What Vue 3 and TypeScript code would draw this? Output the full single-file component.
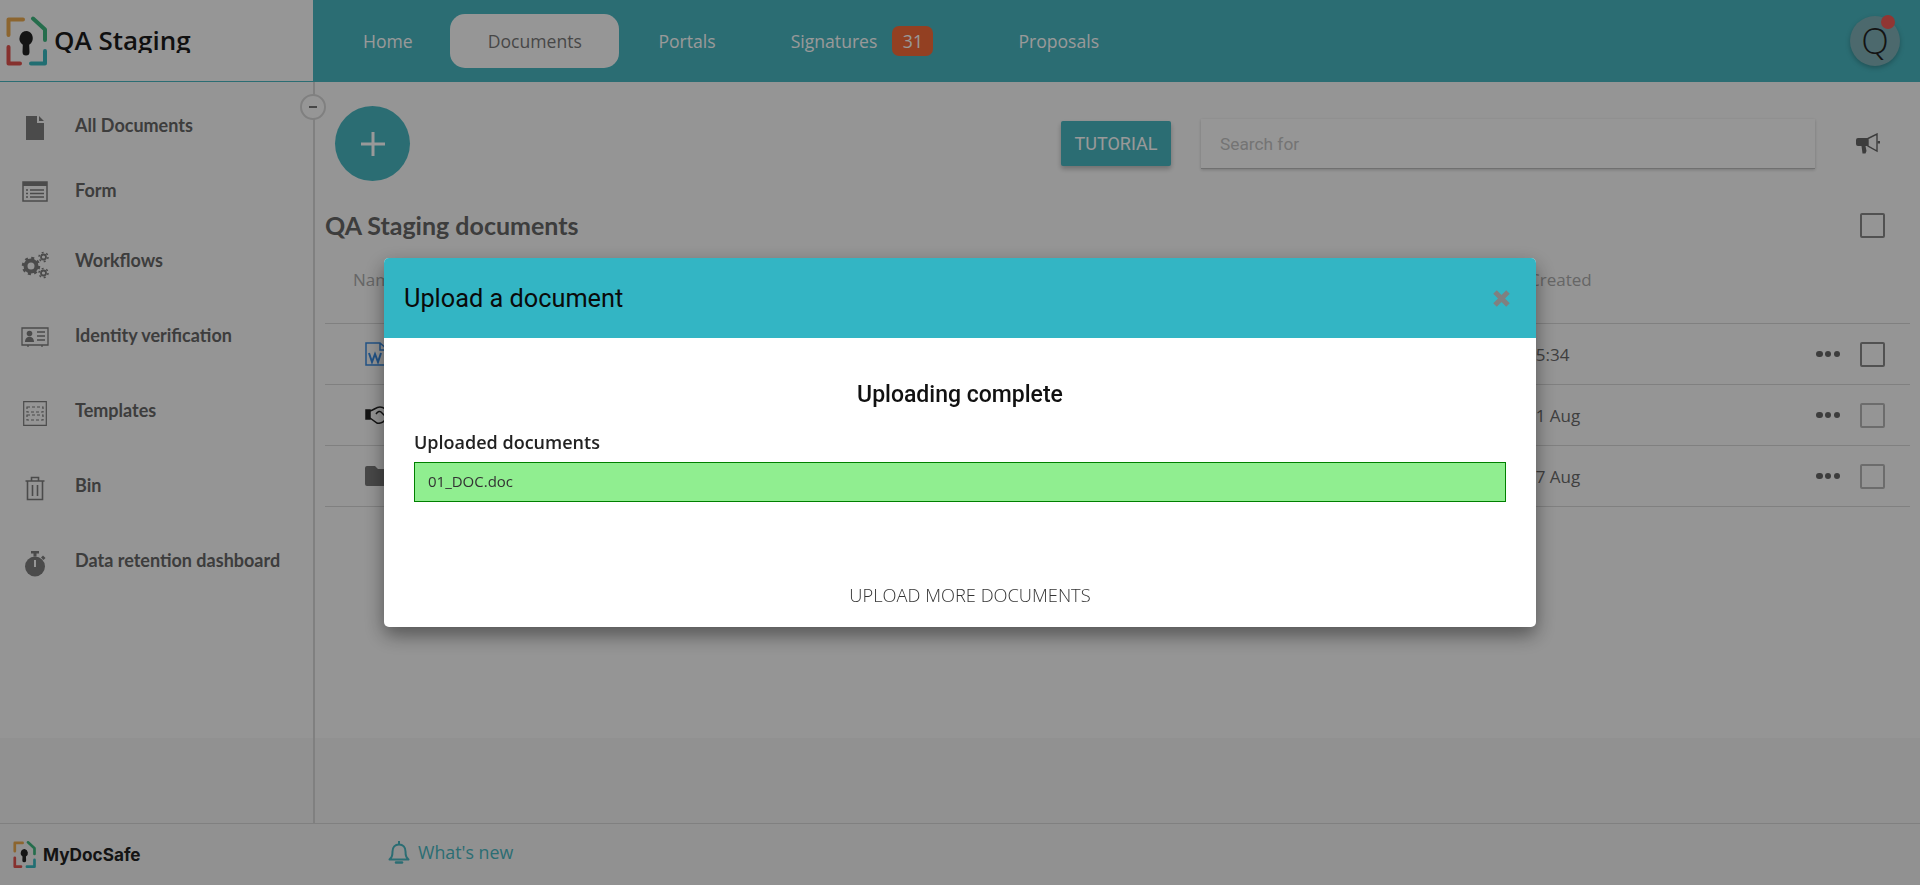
<template>
  <div class="page">
    <header class="topbar">
      <div class="brand">
        <svg class="brand-logo" viewBox="0 0 41 50" fill="none" stroke-width="4" stroke-linecap="round" stroke-linejoin="round">
          <path d="M2.5 19V3.5H17" stroke="#e9a94f" />
          <path d="M27 2.500L39 13.500V24" stroke="#3fb67f" />
          <path d="M2.500 31V47.500H14" stroke="#e0524e" />
          <path d="M39 35V47.500H25" stroke="#38b8bf" />
          <path d="M21 15a7.500 7.500 0 0 0-4.200 13.700L16.500 36a3.500 3.500 0 0 0 7 0l-.3-7.300A7.500 7.500 0 0 0 21 15z" fill="#222" stroke="none" />
        </svg>
        <span class="brand-name">QA Staging</span>
      </div>
      <nav class="nav">
        <a v-for="item in navItems" :key="item.label" class="nav-item" :class="{ active: item.active, 'has-badge': item.badge }">
          {{ item.label }}
          <span v-if="item.badge" class="badge">{{ item.badge }}</span>
        </a>
      </nav>
      <div class="avatar">Q<span class="avatar-dot"></span></div>
    </header>

    <div class="middle">
      <aside class="sidebar">
        <button class="collapse"><span></span></button>
        <div v-for="item in sideItems" :key="item.label" class="side-item">
          <span class="side-icon">
            <svg v-if="item.icon === 'file'" width="20" height="24" viewBox="0 0 20 24" fill="#7d7d7d"><path d="M1 0h11v7h7v17H1zM14 0l5 5h-5z" /></svg>
            <svg v-else-if="item.icon === 'form'" width="26" height="21" viewBox="0 0 26 21" fill="none" stroke="#7d7d7d" stroke-width="1.500"><path d="M1 1h24v19H1z" /><path d="M1 3h24" stroke-width="4" /><path d="M4 9h2M8 9h14M4 12.500h2M8 12.500h14M4 16h2M8 16h14" /></svg>
            <svg v-else-if="item.icon === 'gears'" width="28" height="28" viewBox="0 0 28 28" fill="none" stroke="#7d7d7d">
              <circle cx="10" cy="15" r="5.500" stroke-width="4" />
              <circle cx="10" cy="15" r="8" stroke-width="2.500" stroke-dasharray="3 3.280" />
              <circle cx="22.500" cy="6" r="2.500" stroke-width="1.800" />
              <circle cx="22.500" cy="6" r="4.500" stroke-width="1.500" stroke-dasharray="2 2.700" />
              <circle cx="22.500" cy="22" r="2.500" stroke-width="1.800" />
              <circle cx="22.500" cy="22" r="4.500" stroke-width="1.500" stroke-dasharray="2 2.700" />
            </svg>
            <svg v-else-if="item.icon === 'id'" width="28" height="22" viewBox="0 0 28 22" fill="none" stroke="#7d7d7d" stroke-width="1.300">
              <path d="M1 2h26v17H1zM7 19v2M21 19v2" />
              <circle cx="8.500" cy="7.500" r="2.800" fill="#7d7d7d" stroke="none" />
              <path d="M4 16c0-7 9-7 9 0z" fill="#7d7d7d" stroke="none" />
              <path d="M16 6h8M16 10h8M16 14h8" />
            </svg>
            <svg v-else-if="item.icon === 'templates'" width="24" height="25" viewBox="0 0 24 25" fill="none" stroke="#7d7d7d" stroke-width="1.200">
              <path d="M.7.700h22.600v23.600H.7z" />
              <path d="M4 6h16v5H4zM4 14h16v5H4z" stroke-dasharray="3 2" />
            </svg>
            <svg v-else-if="item.icon === 'bin'" width="20" height="25" viewBox="0 0 20 25" fill="none" stroke="#7d7d7d" stroke-width="1.600">
              <path d="M.5 5h19M6.500 5V1.500h7V5M2.500 5v18.500h15V5M7.500 9v11M12.500 9v11" />
            </svg>
            <svg v-else width="22" height="26" viewBox="0 0 22 26" fill="#7d7d7d">
              <path d="M7 0h8v2.500h-2.500v3h-3v-3H7z" />
              <circle cx="11" cy="15.500" r="10" />
              <path d="M19 4.500l2.500 2.500-2 2-2.500-2.500z" />
              <path d="M10 9h2v7h-2z" fill="#fbfbfb" />
            </svg>
          </span>
          <span class="side-label">{{ item.label }}</span>
        </div>
      </aside>

      <main class="main">
        <div class="toolbar">
          <button class="add-btn">
            <svg width="26" height="26" viewBox="0 0 26 26" stroke="#fff" stroke-width="3"><path d="M13 1v24M1 13h24" /></svg>
          </button>
          <button class="tutorial">Tutorial</button>
          <input class="search" placeholder="Search for" />
          <span class="megaphone">
            <svg width="24" height="21" viewBox="0 0 24 21">
              <path d="M2 5h10v8H9.500l1 5-1 2.500H6.500L5.500 13H2a2 2 0 0 1-2-2V7a2 2 0 0 1 2-2z" fill="#666" />
              <path d="M12 5.500 21 1v17l-9-5z" fill="none" stroke="#666" stroke-width="1.400" />
              <path d="M21.500 8h2.500v2.500h-2.500z" fill="#666" />
            </svg>
          </span>
        </div>

        <div class="title-row">
          <h2 class="title">QA Staging documents</h2>
          <span class="check dark"></span>
        </div>

        <div class="table-head">
          <span class="col-name">Name</span>
          <span class="col-date">Created</span>
        </div>

        <div v-for="(row, i) in rows" :key="row.date" class="table-row">
          <span class="col-name row-icon">
            <svg v-if="row.icon === 'word'" width="24" height="24" viewBox="0 0 24 24" fill="none" stroke="#3a8be0" stroke-width="1.500"><path d="M1 1h14l8 7v15H1zM15 1v7h8" /><path d="M4 11l3 9 3-8 3 8 3-9" stroke-width="2" /></svg>
            <svg v-else-if="row.icon === 'hands'" width="28" height="18" viewBox="0 0 28 18" fill="none" stroke="#222" stroke-width="1.500"><path d="M1 4h4v9H1z" fill="#222" /><path d="M5 5c4-1 6-4 10-4s6 3 9 4M5 12l7 5c2 1 4 0 6-1l6-6c2-3 0-5 0-5M11 8c2-3 4-3 5-2l5 5" /></svg>
            <svg v-else width="28" height="20" viewBox="0 0 28 20" fill="#777"><path d="M2 0h8l3 3h13a2 2 0 0 1 2 2v13a2 2 0 0 1-2 2H2a2 2 0 0 1-2-2V2a2 2 0 0 1 2-2z" /></svg>
          </span>
          <span class="col-date row-date">{{ row.date }}</span>
          <span class="dots"><i></i><i></i><i></i></span>
          <span class="check" :class="{ dark: i === 0 }"></span>
        </div>
      </main>
    </div>

    <footer class="footer">
      <div class="foot-brand">
        <svg width="23" height="27" viewBox="0 0 41 50" fill="none" stroke-width="5" stroke-linecap="round" stroke-linejoin="round">
          <path d="M2.5 19V3.500H17" stroke="#e9a94f" />
          <path d="M27 2.500L39 13.500V24" stroke="#3fb67f" />
          <path d="M2.500 31V47.500H14" stroke="#e0524e" />
          <path d="M39 35V47.500H25" stroke="#38b8bf" />
          <path d="M21 15a7.500 7.500 0 0 0-4.200 13.700L16.500 36a3.500 3.500 0 0 0 7 0l-.3-7.300A7.500 7.500 0 0 0 21 15z" fill="#222" stroke="none" />
        </svg>
        <span class="foot-name">MyDocSafe</span>
      </div>
      <a class="whats-new">
        <svg width="22" height="25" viewBox="0 0 22 25" fill="none" stroke="#48b6c0" stroke-width="2" stroke-linejoin="round"><path d="M1.500 19.500c2-2 3-3 3-8 0-4 2.500-7 6.500-7s6.500 3 6.500 7c0 5 1 6 3 8z" /><path d="M11 1v3" /><path d="M8 22.500h6" stroke-width="2.500" stroke-linecap="round" /></svg>
        What's new
      </a>
    </footer>

    <div class="overlay">
      <div class="modal">
        <div class="modal-head">
          <span class="modal-title">Upload a document</span>
          <svg class="modal-close" width="17" height="17" viewBox="0 0 17 17" stroke="#808080" stroke-width="5"><path d="M2 2l13 13M15 2L2 15" /></svg>
        </div>
        <div class="modal-body">
          <h3 class="complete">Uploading complete</h3>
          <div class="uploaded-label">Uploaded documents</div>
          <div class="uploaded-file">01_DOC.doc</div>
          <div class="more">Upload more documents</div>
        </div>
      </div>
    </div>
  </div>
</template>

<script setup lang="ts">
type NavItem = { label: string; active?: boolean; badge?: number };
type SideItem = { label: string; icon: string };
type Row = { icon: string; date: string };

const navItems: NavItem[] = [
  { label: "Home" },
  { label: "Documents", active: true },
  { label: "Portals" },
  { label: "Signatures", badge: 31 },
  { label: "Proposals" },
];

const sideItems: SideItem[] = [
  { label: "All Documents", icon: "file" },
  { label: "Form", icon: "form" },
  { label: "Workflows", icon: "gears" },
  { label: "Identity verification", icon: "id" },
  { label: "Templates", icon: "templates" },
  { label: "Bin", icon: "bin" },
  { label: "Data retention dashboard", icon: "watch" },
];

const rows: Row[] = [
  { icon: "word", date: "15:34" },
  { icon: "hands", date: "11 Aug" },
  { icon: "folder", date: "17 Aug" },
];
</script>

<style>
html,
body {
  margin: 0;
  background: #fbfbfb;
}
</style>

<style scoped>
.page {
  height: 100vh;
  display: flex;
  flex-direction: column;
  overflow: hidden;
  font-family: "Open Sans", sans-serif;
  background: linear-gradient(#f9f9f9 738px, #f2f2f2 738px);
}

/* top bar */
.topbar {
  height: 82px;
  flex: none;
  display: flex;
  background: #48b6c0;
}
.brand {
  width: 313px;
  flex: none;
  box-sizing: border-box;
  border-bottom: 1px solid #48b6c0;
  display: flex;
  align-items: flex-start;
  padding: 16px 0 0 6px;
  background: #fbfbfb;
}
.brand-logo {
  width: 41px;
  height: 50px;
  flex: none;
}
.brand-name {
  margin: 7px 0 0 7px;
  height: 30px;
  overflow: hidden;
  font-size: 26px;
  line-height: 34px;
  font-weight: 600;
  color: #1c1c1c;
}
.nav {
  display: flex;
  align-items: center;
  flex: 1;
  padding: 0 0 1px 50px;
}
.nav-item {
  display: flex;
  align-items: center;
  height: 54px;
  font-size: 17.600px;
  color: #fff;
  margin-right: 75px;
}
.nav-item.active {
  background: #fbfbfb;
  color: #777;
  padding: 0 37.500px;
  margin: 0 39px 0 -37.500px;
  border-radius: 15px;
}
.nav-item.has-badge {
  margin-right: 85px;
}
.badge {
  margin-left: 15px;
  width: 41px;
  height: 30px;
  border-radius: 7px;
  background: #f56b3a;
  text-align: center;
  line-height: 30px;
  font-size: 17.600px;
}
.avatar {
  position: relative;
  width: 50px;
  height: 50px;
  margin: 16px 20px 0 0;
  border-radius: 50%;
  background: #7fb0b6;
  box-shadow: 0 2px 5px rgba(0, 0, 0, 0.25);
  text-align: center;
  font-size: 36px;
  font-weight: 300;
  line-height: 50px;
  color: #222;
}
.avatar-dot {
  position: absolute;
  top: -1px;
  right: 5px;
  width: 14px;
  height: 14px;
  border-radius: 50%;
  background: #f05a55;
}

/* sidebar */
.middle {
  flex: 1;
  min-height: 0;
  display: flex;
}
.sidebar {
  position: relative;
  width: 315px;
  flex: none;
  box-sizing: border-box;
  border-right: 2px solid #d6d6d6;
  padding-top: 31px;
  display: grid;
  grid-template-rows: 65px 70px 75px 75px 75px 75px 75px;
  align-content: start;
}
.collapse {
  position: absolute;
  top: 12px;
  right: -13px;
  width: 26px;
  height: 26px;
  padding: 0;
  border: 2px solid #d6d6d6;
  border-radius: 50%;
  background: #fbfbfb;
  display: flex;
  align-items: center;
  justify-content: center;
}
.collapse span {
  width: 8px;
  height: 2px;
  background: #777;
}
.side-item {
  display: flex;
  align-items: flex-start;
  height: 24px;
}
.side-icon {
  width: 75px;
  flex: none;
  display: flex;
  justify-content: center;
  padding: 3px 5px 0 0;
  box-sizing: border-box;
}
.side-label {
  font-family: Lato, sans-serif;
  font-size: 18px;
  line-height: 24px;
  font-weight: 700;
  color: #666;
  white-space: nowrap;
}

/* main column */
.main {
  flex: 1;
  min-width: 0;
  padding: 24px 10px 0;
}
.toolbar {
  display: flex;
  align-items: center;
  height: 75px;
  margin-left: 10px;
}
.add-btn {
  width: 75px;
  height: 75px;
  padding: 0;
  border: none;
  border-radius: 50%;
  background: #48b6c0;
  display: flex;
  align-items: center;
  justify-content: center;
}
.tutorial {
  margin-left: auto;
  width: 110px;
  height: 45px;
  padding: 0;
  border: none;
  border-radius: 2px;
  background: #48b6c0;
  color: #fff;
  font-family: Roboto, sans-serif;
  font-size: 18px;
  text-transform: uppercase;
  box-shadow: 0 3px 5px rgba(0, 0, 0, 0.25);
}
.search {
  margin-left: 30px;
  width: 614px;
  height: 50px;
  box-sizing: border-box;
  padding: 1px 19px 0;
  border: none;
  border-bottom: 1px solid #bbb;
  background: #fbfbfb;
  font-family: Roboto, sans-serif;
  font-size: 17.300px;
  box-shadow: 0 1px 3px rgba(0, 0, 0, 0.2);
}
.search::placeholder {
  color: #c2c2c2;
}
.megaphone {
  width: 95px;
  flex: none;
  box-sizing: border-box;
  padding-left: 41px;
  display: flex;
}
.title-row {
  display: flex;
  align-items: center;
  justify-content: space-between;
  height: 30px;
  margin-top: 29px;
  margin-bottom: 1px;
}
.title {
  margin: 0;
  font-family: Lato, sans-serif;
  font-size: 25px;
  font-weight: 700;
  color: #666;
}
.check {
  width: 25px;
  height: 25px;
  flex: none;
  box-sizing: border-box;
  margin-right: 25px;
  border: 2px solid #b5b5b5;
  border-radius: 2px;
}
.check.dark {
  border-color: #888;
}
.table-head {
  display: flex;
  box-sizing: border-box;
  height: 83px;
  padding-top: 27px;
  border-bottom: 1px solid #d6d6d6;
  font-size: 17px;
  line-height: 24px;
  color: #aaa;
}
.table-head .col-name {
  padding-left: 28px;
}
.col-name {
  width: 1204px;
  flex: none;
  box-sizing: border-box;
}
.col-date {
  flex: 1;
}
.table-row {
  display: flex;
  align-items: center;
  box-sizing: border-box;
  height: 61px;
  border-bottom: 1px solid #d6d6d6;
}
.row-icon {
  padding-left: 40px;
  display: flex;
}
.row-date {
  margin-left: -3px;
  font-size: 17px;
  color: #6a6a6a;
}
.dots {
  width: 24px;
  margin-right: 20px;
  display: flex;
  justify-content: space-between;
}
.dots i {
  width: 6.500px;
  height: 6.500px;
  border-radius: 50%;
  background: #666;
}

/* footer */
.footer {
  height: 62px;
  flex: none;
  box-sizing: border-box;
  border-top: 1px solid #d6d6d6;
  display: flex;
  align-items: center;
}
.foot-brand {
  width: 388px;
  flex: none;
  box-sizing: border-box;
  padding-left: 13px;
  display: flex;
  align-items: center;
  gap: 7px;
}
.foot-name {
  font-family: Inter, sans-serif;
  font-size: 17.200px;
  font-weight: 700;
  color: #222;
}
.whats-new {
  display: flex;
  align-items: center;
  gap: 8px;
  margin-top: -5px;
  font-size: 17.800px;
  color: #48b6c0;
}

/* upload dialog */
.overlay {
  position: fixed;
  inset: 0;
  background: rgba(0, 0, 0, 0.4);
  display: flex;
  justify-content: center;
  align-items: flex-start;
}
.modal {
  width: 1152px;
  height: 369px;
  margin-top: 258px;
  border-radius: 5px;
  overflow: hidden;
  background: #fff;
  box-shadow: 0 8px 20px rgba(0, 0, 0, 0.45);
}
.modal-head {
  height: 80px;
  display: flex;
  align-items: center;
  justify-content: space-between;
  padding: 0 26px 0 20px;
  background: #33b5c4;
}
.modal-title {
  font-family: Roboto, sans-serif;
  font-size: 25.300px;
  color: #0a0a0a;
}
.modal-body {
  padding: 0 30px;
}
.complete {
  margin: 0;
  padding-top: 42px;
  text-align: center;
  font-family: Roboto, sans-serif;
  font-size: 23px;
  line-height: 30px;
  font-weight: 500;
  color: #111;
}
.uploaded-label {
  margin-top: 20px;
  font-size: 18px;
  line-height: 24px;
  font-weight: 600;
  color: #222;
}
.uploaded-file {
  margin-top: 8px;
  height: 40px;
  box-sizing: border-box;
  padding: 0 13px;
  border: 1px solid green;
  background: #90ee90;
  font-size: 15px;
  line-height: 36px;
  color: #333;
}
.more {
  margin-top: 80px;
  padding-left: 20px;
  text-align: center;
  font-size: 18.300px;
  font-weight: 300;
  text-transform: uppercase;
  color: #333;
}
</style>
